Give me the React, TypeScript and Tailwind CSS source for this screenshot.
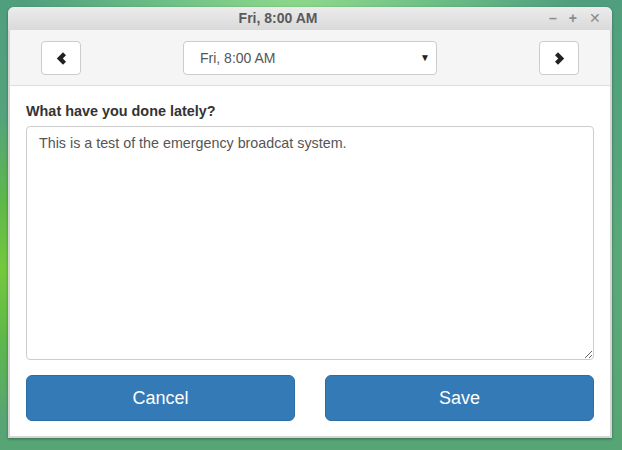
import React, { useState } from "react";

const ChevronLeft: React.FC = () => (
  <svg width="11" height="13" viewBox="0 0 11 13" fill="#222">
    <path d="M7 0.3 L10 3.3 L6.8 6.5 L10 9.7 L7 12.7 L0.8 6.5 Z" />
  </svg>
);

const ChevronRight: React.FC = () => (
  <svg width="11" height="13" viewBox="0 0 11 13" fill="#222">
    <path d="M4 0.3 L1 3.3 L4.2 6.5 L1 9.7 L4 12.7 L10.2 6.5 Z" />
  </svg>
);

const App: React.FC = () => {
  const [note, setNote] = useState<string>(
    "This is a test of the emergency broadcat system."
  );

  return (
    <div
      className="w-[622px] h-[450px] overflow-hidden pl-[8px] pt-[7px] bg-[radial-gradient(ellipse_at_48%_-10%,#92dc8c_0%,#6cbf86_30%,transparent_60%),radial-gradient(ellipse_at_0%_60%,#74c93e_0%,#5db84a_18%,transparent_40%),linear-gradient(180deg,#4f9f7e_0%,#5aa87a_60%,#57a474_100%)]"
      style={{ fontFamily: '"Liberation Sans", Arial, sans-serif' }}
    >
      <div className="w-[604px] h-[431px] flex flex-col rounded-t-[6px] bg-[#d5d5d5] shadow-[0_1px_3px_rgba(0,0,0,0.35)]">
        {/* title bar */}
        <div className="relative h-[23px] flex items-center justify-center pr-[64px] rounded-t-[6px] bg-[linear-gradient(180deg,#ececec,#d9d9d9)]">
          <span className="text-[14px] font-bold text-[#5a5a5a]">
            Fri, 8:00 AM
          </span>
          <div className="absolute right-[11px] top-0 h-full flex items-center gap-[12px] text-[#8a8a8a] text-[14px] font-bold">
            <span>–</span>
            <span>+</span>
            <span className="font-normal">✕</span>
          </div>
        </div>

        <div className="flex-1 flex flex-col mx-[2px] mb-[2px] bg-white">
          {/* toolbar */}
          <div className="h-[56px] flex items-start justify-between px-[31px] pt-[11px] bg-[#f5f5f5] border-b border-[#dddddd]">
            <button className="w-[40px] h-[34px] flex items-center justify-center bg-white border border-[#cccccc] rounded-[4px]">
              <ChevronLeft />
            </button>
            <div className="relative w-[254px] h-[34px] flex items-center bg-white border border-[#cccccc] rounded-[4px] pl-[16px] text-[14px] text-[#555555]">
              Fri, 8:00 AM
              <span className="absolute right-[6px] top-[8px] text-[10px] text-[#222]">
                ▼
              </span>
            </div>
            <button className="w-[40px] h-[34px] flex items-center justify-center bg-white border border-[#cccccc] rounded-[4px]">
              <ChevronRight />
            </button>
          </div>

          {/* body */}
          <div className="flex-1 flex flex-col px-[16px] pt-[15px] pb-[15px]">
            <label className="text-[14.4px] leading-[20px] font-bold text-[#333333] mb-[5px]">
              What have you done lately?
            </label>
            <textarea
              className="h-[234px] w-full border border-[#cccccc] rounded-[4px] px-[12px] py-[6px] text-[14.3px] leading-[20px] text-[#555555] outline-none"
              value={note}
              onChange={(e) => setNote(e.target.value)}
            />
            <div className="flex justify-between mt-[15px]">
              <button className="w-[269px] h-[46px] bg-[#337ab7] border border-[#2e6da4] rounded-[6px] text-white text-[18px]">
                Cancel
              </button>
              <button className="w-[269px] h-[46px] bg-[#337ab7] border border-[#2e6da4] rounded-[6px] text-white text-[18px]">
                Save
              </button>
            </div>
          </div>
        </div>
      </div>
    </div>
  );
};

export default App;
